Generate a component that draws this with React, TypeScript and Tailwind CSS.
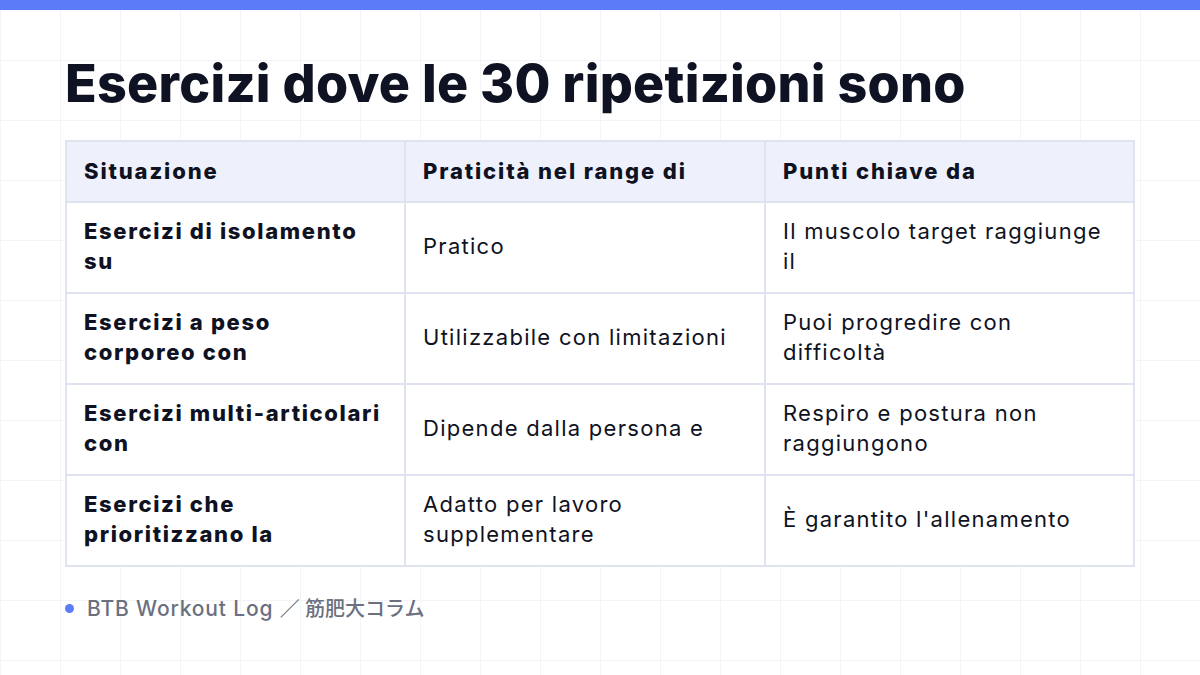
import React from 'react'

const rows = [
    ['Esercizi di isolamento su', 'Pratico', 'Il muscolo target raggiunge il'],
    ['Esercizi a peso corporeo con', 'Utilizzabile con limitazioni', 'Puoi progredire con difficoltà'],
    ['Esercizi multi-articolari con', 'Dipende dalla persona e', 'Respiro e postura non raggiungono'],
    ['Esercizi che prioritizzano la', 'Adatto per lavoro supplementare', "È garantito l'allenamento"],
]

export default function App() {
    return (
        <div
            className="relative w-[1200px] h-[675px] overflow-hidden bg-white text-[#0f1222]"
            style={{
                fontFamily: 'Inter, "Noto Sans CJK JP", sans-serif',
                backgroundImage:
                    'linear-gradient(to right, #f3f4f8 1px, transparent 1px), linear-gradient(to bottom, #f3f4f8 1px, transparent 1px)',
                backgroundSize: '60px 60px',
            }}
        >
            <div className="h-[10px] bg-[#5b7cf6]" />
            <div className="px-[65px] pt-[42px]">
                <h1 className="text-[52px] leading-[64px] font-extrabold tracking-[0.005em]">
                    Esercizi dove le 30 ripetizioni sono
                </h1>

                <div className="mt-[24px] grid grid-cols-[337px_358px_367px] gap-[2px] p-[2px] bg-[#dfe3ef] w-[1070px] text-[22px] leading-[30px] tracking-[0.058em]">
                    <div className="h-[59px] bg-[#eef1fb] px-[17px] pb-[2px] flex items-center font-extrabold tracking-[0.085em]">Situazione</div>
                    <div className="h-[59px] bg-[#eef1fb] px-[17px] pb-[2px] flex items-center font-extrabold tracking-[0.085em]">Praticità nel range di</div>
                    <div className="h-[59px] bg-[#eef1fb] px-[17px] pb-[2px] flex items-center font-extrabold tracking-[0.085em]">Punti chiave da</div>
                    {rows.map((r, i) => (
                        <React.Fragment key={i}>
                            <div className="h-[89px] bg-white px-[17px] pb-[4px] flex items-center font-extrabold tracking-[0.075em]">{r[0]}</div>
                            <div className="h-[89px] bg-white px-[17px] pb-[4px] flex items-center">{r[1]}</div>
                            <div className="h-[89px] bg-white pl-[17px] pr-[24px] pb-[4px] flex items-center">{r[2]}</div>
                        </React.Fragment>
                    ))}
                </div>

                <div className="mt-[26px] flex items-center gap-[13px] text-[21px] font-medium tracking-[0.04em] text-[#6b7080]">
                    <span className="w-[9px] h-[9px] rounded-full bg-[#5b7cf6]" />
                    <span>
                        BTB Workout Log <span className="text-[20px] tracking-normal">／ 筋肥大コラム</span>
                    </span>
                </div>
            </div>
        </div>
    )
}
